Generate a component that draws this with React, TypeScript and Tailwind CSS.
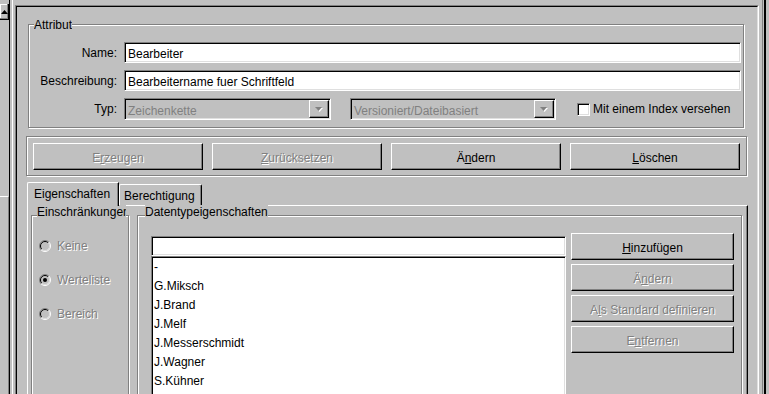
import type { ReactNode } from "react";

const sunken =
  "border border-t-[#808080] border-l-[#808080] border-b-white border-r-white shadow-[inset_1px_1px_0_#000,inset_-1px_-1px_0_#dfdfdf]";
const raised =
  "border border-t-white border-l-white border-b-black border-r-black shadow-[inset_-1px_-1px_0_#808080]";
const dim = "text-[#808080] [text-shadow:1px_1px_0_#fff]";

function Group({
  title,
  className = "",
  legend = "",
  children,
}: {
  title: string;
  className?: string;
  legend?: string;
  children?: ReactNode;
}) {
  return (
    <div
      className={`relative border border-[#808080] shadow-[inset_1px_1px_0_#fff,1px_1px_0_#fff] ${className}`}
    >
      <span
        className={`absolute bg-[#c0c0c0] leading-[14px] whitespace-nowrap overflow-hidden ${legend}`}
      >
        {title}
      </span>
      {children}
    </div>
  );
}

function Btn({
  children,
  disabled,
  className = "",
}: {
  children: ReactNode;
  disabled?: boolean;
  className?: string;
}) {
  return (
    <div
      className={`h-[27px] shrink-0 flex items-center justify-center pt-[2px] whitespace-nowrap ${raised} ${
        disabled ? dim : "text-black"
      } ${className}`}
    >
      {children}
    </div>
  );
}

function Field({ value = "" }: { value?: string }) {
  return (
    <div
      className={`h-[21px] bg-white pl-[3px] pt-[4px] whitespace-nowrap overflow-hidden ${sunken}`}
    >
      {value}
    </div>
  );
}

function Combo({ value, width }: { value: string; width: string }) {
  return (
    <div className={`h-[22px] flex p-px bg-[#c0c0c0] ${sunken} ${width}`}>
      <div className="flex-1 pl-[2px] pt-[4px] text-[#808080] whitespace-nowrap overflow-hidden">
        {value}
      </div>
      <div className={`w-[20px] flex items-center justify-center ${raised}`}>
        <svg width="8" height="5" viewBox="0 0 8 5">
          <polygon points="1,1 8,1 4.5,5" fill="#fff" />
          <polygon points="0,0 7,0 3.5,4" fill="#808080" />
        </svg>
      </div>
    </div>
  );
}

function Radio({ label, checked }: { label: string; checked?: boolean }) {
  return (
    <div className="h-[34px] flex items-center gap-[6px]">
      <svg width="12" height="12" viewBox="0 0 12 12">
        <circle cx="6" cy="6" r="5" fill="#c0c0c0" />
        <path d="M9.9 2.1 A5.5 5.5 0 0 0 2.1 9.9" stroke="#808080" fill="none" />
        <path d="M2.1 9.9 A5.5 5.5 0 0 0 9.9 2.1" stroke="#fff" fill="none" />
        <path d="M9.2 2.8 A4.5 4.5 0 0 0 2.8 9.2" stroke="#000" fill="none" />
        <path d="M2.8 9.2 A4.5 4.5 0 0 0 9.2 2.8" stroke="#dfdfdf" fill="none" />
        {checked && <circle cx="6" cy="6" r="2" fill="#000" />}
      </svg>
      <span className={dim}>{label}</span>
    </div>
  );
}

const names = ["-", "G.Miksch", "J.Brand", "J.Melf", "J.Messerschmidt", "J.Wagner", "S.Kühner", "T.Berger"];

export default function App() {
  return (
    <div className="w-[769px] h-[394px] overflow-hidden bg-[#c0c0c0] flex text-[12px] leading-[14px] text-black font-['Liberation_Sans',Arial,sans-serif]">
      {/* scrollbar stub */}
      <div className="w-[9px] shrink-0 flex flex-col">
        <div className="h-[4px]" />
        <div className="h-[16px] flex items-center justify-center border-b border-r border-black shadow-[inset_-1px_-1px_0_#808080,inset_1px_1px_0_#fff]">
          <svg width="7" height="4" viewBox="0 0 7 4">
            <polygon points="3.5,0 7,4 0,4" fill="#000" />
          </svg>
        </div>
        <div className="h-[176px]" />
        <div className="flex-1 border-t border-t-white border-r border-r-[#808080]" />
      </div>
      <div className="w-px shrink-0 bg-black" />
      <div className="w-[2px] shrink-0" />
      <div className="w-px shrink-0 bg-white" />
      <div className="w-[2px] shrink-0" />

      {/* main panel */}
      <div className="w-[744px] shrink-0 mt-[5px] border-t border-l border-t-[#808080] border-l-[#808080] border-r border-r-white">
        <div className="h-full border-t border-l border-black border-r border-r-[#dfdfdf] flex flex-col">
          <Group
            title="Attribut"
            className="ml-[11px] mt-[17px] w-[716px] h-[104px] shrink-0 pt-[17px] pr-[2px]"
            legend="top-[-7px] left-[5px]"
          >
            <div className="grid grid-cols-[88px_1fr] gap-x-[7px] gap-y-[7px]">
              <div className="h-[21px] flex items-center justify-end">Name:</div>
              <Field value="Bearbeiter" />
              <div className="h-[21px] flex items-center justify-end">Beschreibung:</div>
              <Field value="Bearbeitername fuer Schriftfeld" />
              <div className="h-[22px] flex items-center justify-end">Typ:</div>
              <div className="flex items-center">
                <Combo value="Zeichenkette" width="w-[207px]" />
                <div className="w-[19px]" />
                <Combo value="Versioniert/Dateibasiert" width="w-[206px]" />
                <div className="w-[21px]" />
                <div className={`w-[13px] h-[13px] bg-white ${sunken}`} />
                <span className="ml-[3px] whitespace-nowrap">Mit einem Index versehen</span>
              </div>
            </div>
          </Group>

          <div className="ml-[9px] mt-[8px] w-[721px] h-[40px] shrink-0 border border-[#808080] shadow-[inset_1px_1px_0_#fff,1px_1px_0_#fff] pt-[6px] px-[6px] flex gap-[9px]">
            <Btn disabled className="flex-1">
              E<span className="underline">r</span>zeugen
            </Btn>
            <Btn disabled className="flex-1">
              <span className="underline">Z</span>urücksetzen
            </Btn>
            <Btn className="flex-1">
              Ä<span className="underline">n</span>dern
            </Btn>
            <Btn className="flex-1">
              <span className="underline">L</span>öschen
            </Btn>
          </div>

          {/* tabs */}
          <div className="ml-[10px] mt-[6px] h-[23px] shrink-0 flex items-end">
            <div className="relative z-10 w-[92px] h-[24px] -mb-px bg-[#c0c0c0] border-t border-l border-white border-r border-r-black shadow-[inset_-1px_0_0_#808080] rounded-tl-[2px] pl-[6px] pt-[4px]">
              Eigenschaften
            </div>
            <div className="w-[83px] h-[21px] border-t border-l border-white border-r border-r-black shadow-[inset_-1px_0_0_#808080] rounded-t-[2px] pl-[4px] pt-[4px]">
              Berechtigung
            </div>
          </div>
          <div className="ml-[10px] w-[721px] flex-1 border-t border-l border-white border-r border-r-black shadow-[inset_-1px_0_0_#808080] flex items-start">
            <Group
              title="Einschränkungen"
              className="ml-[3px] mt-[9px] w-[98px] h-[220px] shrink-0 pt-[13px] pl-[7px]"
              legend="top-[-11px] left-[5px] w-[89px]"
            >
              <Radio label="Keine" />
              <Radio label="Werteliste" checked />
              <Radio label="Bereich" />
            </Group>
            <Group
              title="Datentypeigenschaften"
              className="ml-[8px] mt-[9px] w-[605px] h-[220px] shrink-0 pt-[17px] pl-[13px] pr-[7px] flex items-start gap-[5px]"
              legend="top-[-11px] left-[7px]"
            >
              <div className="flex-1 mt-[3px] flex flex-col">
                <div className={`h-[20px] bg-white ${sunken}`} />
                <div className={`h-[180px] bg-white pt-px pl-[2px] ${sunken}`}>
                  {names.map((n) => (
                    <div key={n} className="leading-[19px] whitespace-nowrap">
                      {n}
                    </div>
                  ))}
                </div>
              </div>
              <div className="w-[163px] flex flex-col gap-[4px]">
                <Btn>
                  <span className="underline">H</span>inzufügen
                </Btn>
                <Btn disabled>
                  Ä<span className="underline">n</span>dern
                </Btn>
                <Btn disabled>
                  A<span className="underline">l</span>s Standard definieren
                </Btn>
                <Btn disabled>
                  E<span className="underline">n</span>tfernen
                </Btn>
              </div>
            </Group>
          </div>
        </div>
      </div>

      <div className="w-[3px] shrink-0" />
      <div className="w-px shrink-0 bg-[#808080]" />
      <div className="w-px shrink-0" />
      <div className="w-[2px] shrink-0 bg-black" />
      <div className="flex-1" />
    </div>
  );
}
